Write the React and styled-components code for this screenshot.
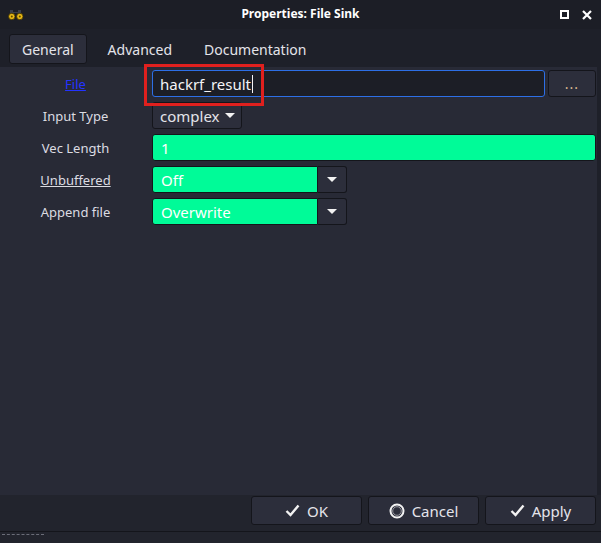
import React from 'react';
import styled, { createGlobalStyle } from 'styled-components';

const Global = createGlobalStyle`
    html, body {
        margin: 0;
        padding: 0;
        background: #1e2029;
    }
    * { box-sizing: border-box; }
`

const Window = styled.div`
    width: 601px;
    height: 543px;
    display: flex;
    flex-direction: column;
    background: #1e2029;
    font-family: "Noto Sans", "Open Sans", sans-serif;
    color: #e6e6ea;
    position: relative;
    overflow: hidden;
`

const TitleBar = styled.div`
    height: 29px;
    display: flex;
    align-items: center;
    justify-content: space-between;
    padding: 0 8px 0 8px;
    background: #1c1e26;
`

const Title = styled.div`
    font-size: 12px;
    font-weight: 700;
    color: #ffffff;
    position: absolute;
    left: 0;
    right: 0;
    top: 5px;
    text-align: center;
    pointer-events: none;
`

const WinButtons = styled.div`
    display: flex;
    align-items: center;
    gap: 13px;
    padding-right: 1px;
`

const TabBar = styled.div`
    height: 38px;
    display: flex;
    align-items: flex-start;
    padding: 5px 0 0 9px;
    background: #1e2029;
`

const Tab = styled.div`
    height: 30px;
    display: flex;
    align-items: center;
    padding: 0 ${p => (p.active ? '12px' : '16px')};
    margin-right: ${p => (p.active ? '4px' : '0')};
    margin-left: ${p => (p.shift || '0')};
    font-size: 14px;
    color: #e4e4ea;
    background: ${p => (p.active ? '#2c2e3b' : 'transparent')};
    border: 1px solid ${p => (p.active ? '#14151b' : 'transparent')};
    border-radius: 3px;
`

const Content = styled.div`
    flex: 1;
    margin-right: 4px;
    background: #282a36;
    padding: 3px 1px 0 0;
    position: relative;
`

const Form = styled.div`
    display: grid;
    grid-template-columns: 152px 1fr;
    grid-auto-rows: 27px;
    row-gap: 5px;
`

const Label = styled.div`
    display: flex;
    align-items: center;
    justify-content: center;
    padding-right: 1px;
    font-size: 13px;
    color: ${p => (p.link ? '#2433ff' : '#dcdce2')};
    text-decoration: ${p => (p.underline ? 'underline' : 'none')};
`

const Field = styled.div`
    display: flex;
    gap: 3px;
    min-width: 0;
`

const TextInput = styled.div`
    flex: 1;
    display: flex;
    align-items: center;
    padding-left: 7px;
    font-size: 15px;
    color: #f4f4f6;
    background: #1c1e26;
    border: 1px solid #2d6fe6;
    border-radius: 3px;
`

const Caret = styled.span`
    display: inline-block;
    width: 1px;
    height: 18px;
    background: #f4f4f6;
    margin-left: 1px;
`

const Button = styled.div`
    width: ${p => p.w || 'auto'};
    height: 100%;
    display: flex;
    align-items: center;
    justify-content: center;
    gap: 5px;
    padding: ${p => p.pad || '0'};
    font-size: 14px;
    color: #e4e4ea;
    background: #2c2e3b;
    border: 1px solid #14151b;
    border-radius: 3px;
`

const GreenBox = styled.div`
    width: ${p => p.w || 'auto'};
    flex: ${p => (p.w ? 'none' : '1')};
    display: flex;
    align-items: center;
    padding-left: 8px;
    font-size: 15px;
    color: #ffffff;
    background: #00fb98;
    border: 1px solid #14151b;
    border-radius: ${p => (p.combo ? '3px 0 0 3px' : '3px')};
`

const Combo = styled.div`
    display: flex;
`

const ArrowButton = styled.div`
    width: 29px;
    display: flex;
    align-items: center;
    justify-content: center;
    background: #2c2e3b;
    border: 1px solid #14151b;
    border-left: none;
    border-radius: 0 3px 3px 0;
`

const Highlight = styled.div`
    position: absolute;
    left: 144px;
    top: -3px;
    width: 120px;
    height: 42px;
    border: 3px solid #e0201e;
    pointer-events: none;
`

const ButtonBar = styled.div`
    height: 37px;
    display: flex;
    justify-content: flex-end;
    align-items: flex-start;
    gap: 6px;
    padding: 1px 5px 0 0;
    background: #22242d;
    border-bottom: 1px solid #14151b;
`

const FootButton = styled(Button)`
    width: 111px;
    height: 29px;
    font-size: 15px;
    gap: 7px;
`

const Footer = styled.div`
    height: 11px;
    background: #22242d;
    padding-left: 2px;
`

const Dots = styled.div`
    width: 42px;
    height: 1px;
    margin-top: 2px;
    border-top: 1px dashed #6b6d78;
`

const Arrow = () => (
    <svg width="10" height="6" viewBox="0 0 10 6">
        <path d="M0 0 L10 0 L5 5 Z" fill="#f2f2f2" />
    </svg>
)

const Check = () => (
    <svg width="15" height="13" viewBox="0 0 15 13">
        <path d="M1.5 7 L5.5 11 L13.5 1.5" stroke="#f2f2f2" strokeWidth="2.4" fill="none" />
    </svg>
)

const CancelIcon = () => (
    <svg width="16" height="16" viewBox="0 0 16 16">
        <circle cx="8" cy="8" r="6.5" fill="none" stroke="#f2f2f2" strokeWidth="2" />
        <circle cx="8" cy="8" r="4.3" fill="none" stroke="#9a9aa2" strokeWidth="1" />
    </svg>
)

const Logo = () => (
    <svg width="16" height="12" viewBox="0 0 16 12">
        <rect x="2" y="1" width="3" height="3" fill="#3a3f4a" />
        <rect x="10" y="1" width="3" height="3" fill="#3a3f4a" />
        <rect x="5" y="3" width="6" height="1" fill="#3a3f4a" />
        <circle cx="3.8" cy="7.5" r="3.2" fill="#e8b816" stroke="#3a3000" strokeWidth="0.8" />
        <circle cx="11.8" cy="7.5" r="3.2" fill="#e8b816" stroke="#3a3000" strokeWidth="0.8" />
        <circle cx="3.8" cy="7.5" r="1" fill="#5a4a00" />
        <circle cx="11.8" cy="7.5" r="1" fill="#5a4a00" />
    </svg>
)

const Maximize = () => (
    <svg width="9" height="9" viewBox="0 0 9 9">
        <rect x="1" y="1" width="7" height="7" fill="none" stroke="#ffffff" strokeWidth="2" />
    </svg>
)

const Close = () => (
    <svg width="10" height="10" viewBox="0 0 10 10">
        <path d="M1 1 L9 9 M9 1 L1 9" stroke="#ffffff" strokeWidth="2.2" />
    </svg>
)

export default function App() {
  return (
    <Window>
        <Global />
        <TitleBar>
            <Logo />
            <Title>Properties: File Sink</Title>
            <WinButtons>
                <Maximize />
                <Close />
            </WinButtons>
        </TitleBar>

        <TabBar>
            <Tab active>General</Tab>
            <Tab>Advanced</Tab>
            <Tab shift="-2px">Documentation</Tab>
        </TabBar>

        <Content>
            <Form>
                <Label link underline>File</Label>
                <Field>
                    <TextInput>hackrf_result<Caret /></TextInput>
                    <Button w="48px"><span style={{ color: '#d8b890', letterSpacing: '1px' }}>...</span></Button>
                </Field>

                <Label>Input Type</Label>
                <Field>
                    <Button pad="0 6px 0 7px" style={{ fontSize: 15 }}>complex <Arrow /></Button>
                </Field>

                <Label>Vec Length</Label>
                <Field>
                    <GreenBox>1</GreenBox>
                </Field>

                <Label underline>Unbuffered</Label>
                <Combo>
                    <GreenBox combo w="166px">Off</GreenBox>
                    <ArrowButton><Arrow /></ArrowButton>
                </Combo>

                <Label>Append file</Label>
                <Combo>
                    <GreenBox combo w="166px">Overwrite</GreenBox>
                    <ArrowButton><Arrow /></ArrowButton>
                </Combo>
            </Form>
            <Highlight />
        </Content>

        <ButtonBar>
            <FootButton><Check />OK</FootButton>
            <FootButton><CancelIcon />Cancel</FootButton>
            <FootButton><Check />Apply</FootButton>
        </ButtonBar>
        <Footer>
            <Dots />
        </Footer>
    </Window>
  )
}
